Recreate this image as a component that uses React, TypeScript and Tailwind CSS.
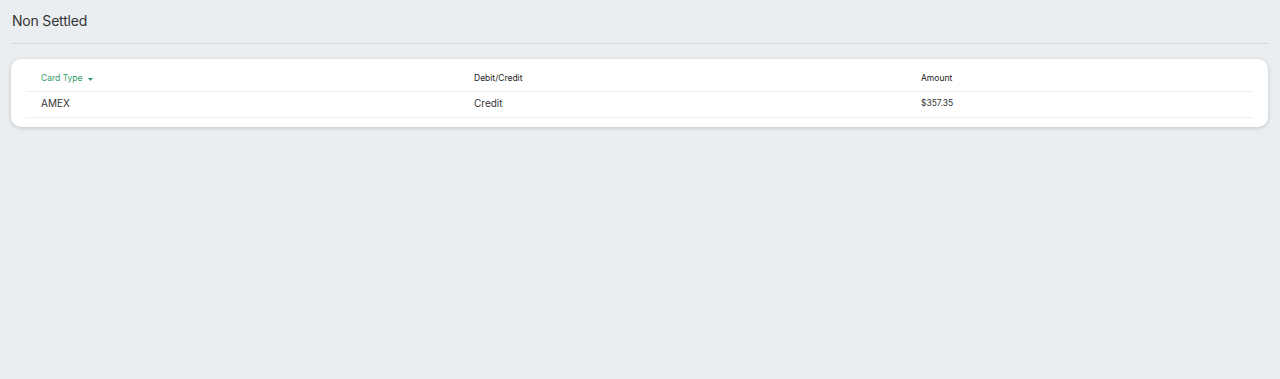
export default function App() {
  return (
    <div className="min-h-[379px] bg-[#ebeef1] px-3 font-['Inter','Liberation_Sans',sans-serif] text-[#2b2b2b]">
      <div className="flex h-[44px] items-center border-b border-[#d3d7db]">
        <h1 className="pb-[2px] text-[14px] leading-none tracking-[-0.2px] text-[#333]">Non Settled</h1>
      </div>
      <div className="-ml-px mt-[15px] rounded-[10px] bg-white px-[15px] pb-[9px] pt-[2px] shadow-[0_1px_4px_rgba(0,0,0,0.18)]">
        <div className="grid h-[31px] grid-cols-[433px_447px_1fr] items-end border-b border-[#eef0f2] pb-[6px] text-[8.5px]">
          <div className="flex items-center gap-[5px] pl-[15px] text-[#2f9a67]">
            Card Type
            <svg width="5" height="3" viewBox="0 0 5 3" className="mt-[2px]">
              <path d="M0 0h5L2.5 3z" fill="#2f9a67" />
            </svg>
          </div>
          <div className="pl-[15px] text-[#222]">Debit/Credit</div>
          <div className="pl-[15px] text-[#222]">Amount</div>
        </div>
        <div className="grid h-[26px] grid-cols-[433px_447px_1fr] items-center border-b border-[#eef0f2] pb-[3px] text-[10px] text-[#333]">
          <div className="pl-[15px]">AMEX</div>
          <div className="pl-[15px]">Credit</div>
          <div className="pl-[15px] text-[8.5px]">$357.35</div>
        </div>
      </div>
    </div>
  )
}
